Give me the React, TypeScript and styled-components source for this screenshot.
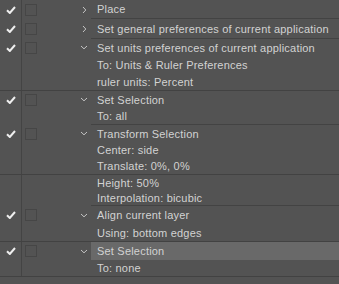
import React from 'react';
import styled, { createGlobalStyle, css } from 'styled-components';

type Sep = 'full' | 'inset' | undefined;

type Step = {
  label: string;
  h: number;
  header?: boolean;
  open?: boolean;
  sep?: Sep;
  selected?: boolean;
};

const steps: Step[] = [
  { label: 'Place', h: 18, header: true, sep: 'inset' },
  { label: 'Set general preferences of current application', h: 19, header: true, sep: 'inset' },
  { label: 'Set units preferences of current application', h: 17, header: true, open: true },
  { label: 'To: Units & Ruler Preferences', h: 17 },
  { label: 'ruler units: Percent', h: 17, sep: 'full' },
  { label: 'Set Selection', h: 17, header: true, open: true },
  { label: 'To: all', h: 16, sep: 'inset' },
  { label: 'Transform Selection', h: 17, header: true, open: true },
  { label: 'Center: side', h: 16 },
  { label: 'Translate: 0%, 0%', h: 16, sep: 'full' },
  { label: 'Height: 50%', h: 15 },
  { label: 'Interpolation: bicubic', h: 15, sep: 'inset' },
  { label: 'Align current layer', h: 18, header: true, open: true },
  { label: 'Using: bottom edges', h: 17, sep: 'full' },
  { label: 'Set Selection', h: 18, header: true, open: true, selected: true },
  { label: 'To: none', h: 16, sep: 'full' },
];

export default function App() {
  return (
    <>
      <GlobalStyle />
      <Panel>
        {steps.map((s, i) => (
          <Row key={i} $sep={s.sep} style={{ height: s.h + (s.sep ? 1 : 0) }}>
            <CheckCell>
              {s.header && (
                <svg width="10" height="8" viewBox="0 0 10 8">
                  <path d="M1 4.2 L3.8 7 L9 1" fill="none" stroke="#eeeeee" strokeWidth="2" />
                </svg>
              )}
            </CheckCell>
            <ToggleCell>
              {s.header && <Box />}
              {s.header && (
                <Chevron>
                  {s.open ? (
                    <svg width="8" height="5" viewBox="0 0 8 5">
                      <polyline points="1,1 4,3.8 7,1" fill="none" stroke="#c4c4c4" strokeWidth="1" />
                    </svg>
                  ) : (
                    <svg width="5" height="8" viewBox="0 0 5 8">
                      <polyline points="1,1 3.8,4 1,7" fill="none" stroke="#c4c4c4" strokeWidth="1" />
                    </svg>
                  )}
                </Chevron>
              )}
            </ToggleCell>
            <Label $sep={s.sep} $selected={s.selected}>
              {s.label}
            </Label>
          </Row>
        ))}
      </Panel>
    </>
  );
}

const GlobalStyle = createGlobalStyle`
  html, body {
    margin: 0;
    padding: 0;
    background: #535353;
  }
  * {
    box-sizing: border-box;
  }
`;

const Panel = styled.div`
  width: 339px;
  height: 284px;
  background: #535353;
  font-family: 'Liberation Sans', Arial, sans-serif;
  font-size: 11px;
  color: #d2d2d2;
  overflow: hidden;
`;

const Row = styled.div<{ $sep: Sep }>`
  display: grid;
  grid-template-columns: 22px 69px 1fr;
  ${({ $sep }) =>
    $sep === 'full' &&
    css`
      border-bottom: 1px solid #424242;
    `}
`;

const CheckCell = styled.div`
  display: flex;
  align-items: center;
  justify-content: flex-start;
  padding-left: 6px;
  border-right: 1px solid #444444;
`;

const ToggleCell = styled.div`
  display: flex;
  align-items: center;
  padding-left: 3px;
`;

const Box = styled.div`
  width: 12px;
  height: 12px;
  border: 1px solid #464646;
`;

const Chevron = styled.div`
  margin-left: auto;
  width: 12px;
  display: flex;
  align-items: center;
  justify-content: center;
  margin-right: 1px;
`;

const Label = styled.div<{ $sep: Sep; $selected?: boolean }>`
  display: flex;
  align-items: center;
  padding-left: 6px;
  white-space: nowrap;
  letter-spacing: 0.2px;
  ${({ $sep }) =>
    $sep === 'inset' &&
    css`
      border-bottom: 1px solid #434343;
    `}
  ${({ $selected }) =>
    $selected &&
    css`
      background: #696969;
    `}
`;
